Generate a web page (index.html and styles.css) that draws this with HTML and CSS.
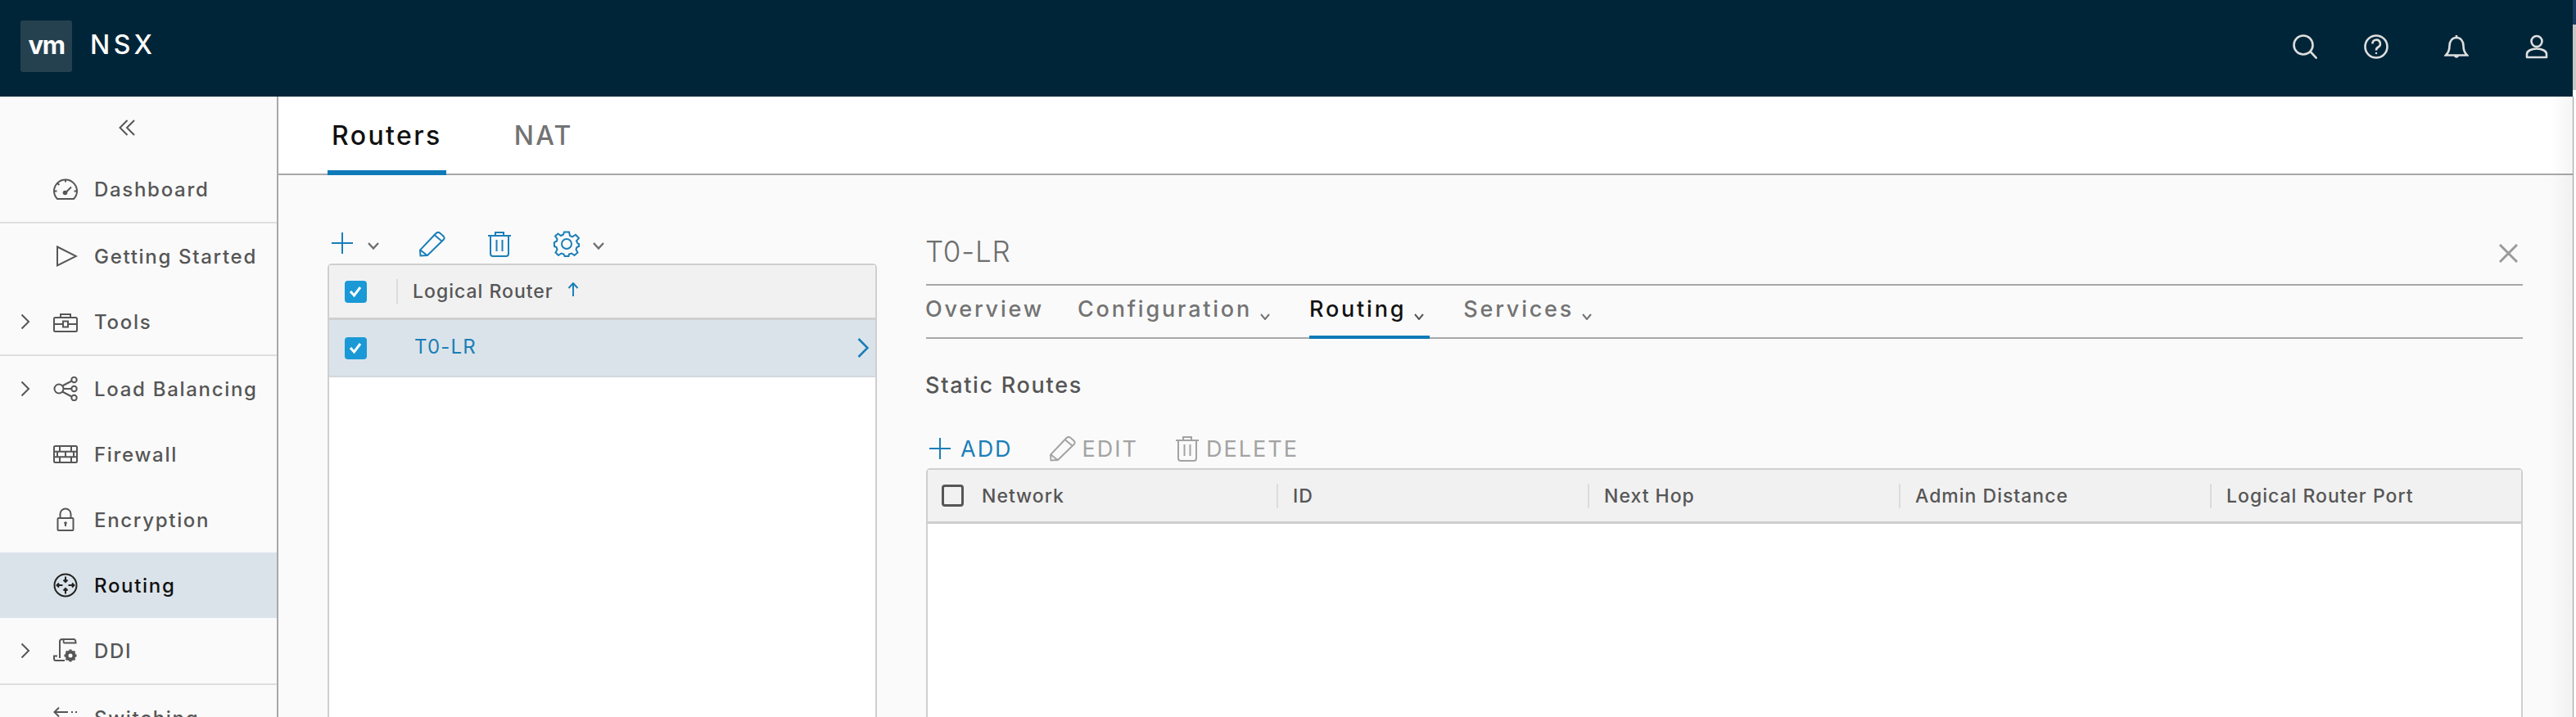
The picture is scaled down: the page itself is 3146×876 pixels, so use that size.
FILE: index.html
```html
<!DOCTYPE html>
<html lang="en">
<head>
    <meta charset="UTF-8">
    <title>NSX</title>
    <link rel="stylesheet" href="styles.css">
</head>
<body>
    <div class="page">
        <header class="header">
            <div class="logo"><span class="logo-vm">vm</span></div>
            <div class="brand">NSX</div>
            <div class="header-icons">
                <svg class="search-icon" width="30" height="30" viewBox="0 0 30 30"><circle cx="13" cy="13" r="11.5"/><path d="M21.500 21 L29.500 29.500"/></svg>
                <svg class="help-icon" width="30" height="30" viewBox="0 0 30 30"><circle cx="15" cy="15" r="13.500"/><path d="M10.500 11.500 A4.700 4.700 0 1 1 17.500 15.500 C15.500 16.500 15 17.500 15 19.500"/><circle class="fill" cx="15" cy="23" r="1.200"/></svg>
                <svg class="bell-icon" width="30" height="30" viewBox="0 0 30 30"><path d="M2 25.500 C5.500 22 6.500 19 6.500 14 C6.500 8 10 4 15 4 C20 4 23.500 8 23.500 14 C23.500 19 24.500 22 28 25.500 Z"/><path d="M15 1 V4"/><path class="fill" d="M12 26 H18 C17.500 29.500 12.500 29.500 12 26 Z"/></svg>
                <svg class="user-icon" width="30" height="30" viewBox="0 0 30 30"><circle cx="15" cy="8.500" r="6.500"/><path d="M3 28 V24 C3 20 9 17.500 15 17.500 C21 17.500 27 20 27 24 V28 Z" stroke-linejoin="round"/></svg>
            </div>
        </header>

        <div class="layout">
            <nav class="sidebar">
                <div class="collapse">
                    <svg width="20" height="20" viewBox="0 0 20 20"><path d="M10.500 1 L1.500 10 L10.500 19 M19 1 L10 10 L19 19"/></svg>
                </div>
                <div class="nav-group">
                    <div class="nav-item">
                        <span class="nav-arrow"></span>
                        <svg class="nav-icon" width="30" height="30" viewBox="0 0 30 30"><path d="M5 27 C2.500 24.500 1 21 1 17.500 A14 14 0 0 1 29 17.500 C29 21 27.500 24.500 25 27 Z"/><path d="M15 3.500 V6.500 M5 7.500 L7.300 10 M1 17.500 H4.500 M25.500 17.500 H29 M15.500 19 L22 12.500"/><circle class="fill" cx="14.500" cy="19.500" r="2.800"/></svg>
                        <span>Dashboard</span>
                    </div>
                </div>
                <div class="nav-group">
                    <div class="nav-item">
                        <span class="nav-arrow"></span>
                        <svg class="nav-icon" width="30" height="30" viewBox="0 0 30 30"><path d="M5 3.500 L28 15 L5 26.500 Z"/></svg>
                        <span>Getting Started</span>
                    </div>
                    <div class="nav-item">
                        <svg class="nav-arrow" width="12" height="20" viewBox="0 0 12 20"><path d="M1.500 1.500 L10 10 L1.500 18.500"/></svg>
                        <svg class="nav-icon" width="30" height="30" viewBox="0 0 30 30"><path d="M2.500 10 H27.500 C28.500 10 29 10.500 29 11.500 V25.500 C29 26.500 28.500 27 27.500 27 H2.500 C1.500 27 1 26.500 1 25.500 V11.500 C1 10.500 1.500 10 2.500 10 Z M1 18 H12 M18 18 H29 M9 10 V6 H21 V10"/><rect x="12" y="14.500" width="6" height="7"/></svg>
                        <span>Tools</span>
                    </div>
                </div>
                <div class="nav-group">
                    <div class="nav-item">
                        <svg class="nav-arrow" width="12" height="20" viewBox="0 0 12 20"><path d="M1.500 1.500 L10 10 L1.500 18.500"/></svg>
                        <svg class="nav-icon" width="30" height="30" viewBox="0 0 30 30"><circle cx="7" cy="15" r="5.500"/><circle cx="25.500" cy="4" r="3.200"/><circle cx="25.500" cy="15" r="3.200"/><circle cx="25.500" cy="26" r="3.200"/><path d="M11 11.500 L22.500 5.500 M12.500 15 H22 M11 18.500 L22.500 24.500"/></svg>
                        <span>Load Balancing</span>
                    </div>
                    <div class="nav-item">
                        <span class="nav-arrow"></span>
                        <svg class="nav-icon" width="30" height="30" viewBox="0 0 30 30"><rect x="1" y="5" width="28" height="20" rx="1.500"/><path d="M1 11.700 H29 M1 18.300 H29 M8 5 V11.700 M22 5 V11.700 M15 11.700 V18.300 M5 11.700 V18.300 M25 11.700 V18.300 M8 18.300 V25 M22 18.300 V25"/></svg>
                        <span>Firewall</span>
                    </div>
                    <div class="nav-item">
                        <span class="nav-arrow"></span>
                        <svg class="nav-icon" width="30" height="30" viewBox="0 0 30 30"><rect x="5.500" y="13" width="19" height="15" rx="1"/><path d="M8.500 13 V8 A6.500 6.500 0 0 1 21.500 8 V13 M15 19.500 V23"/><circle class="fill" cx="15" cy="19" r="1.800"/></svg>
                        <span>Encryption</span>
                    </div>
                    <div class="nav-item nav-item-active">
                        <span class="nav-arrow"></span>
                        <svg class="nav-icon" width="30" height="30" viewBox="0 0 30 30"><circle cx="15" cy="15" r="13.500"/><path d="M15 4.500 V11 M12.500 8.500 L15 11 L17.500 8.500 M15 25.500 V19 M12.500 21.500 L15 19 L17.500 21.500 M11.500 15 H4.500 M7 12.500 L4.500 15 L7 17.500 M18.500 15 H25.500 M23 12.500 L25.500 15 L23 17.500"/></svg>
                        <span>Routing</span>
                    </div>
                    <div class="nav-item">
                        <svg class="nav-arrow" width="12" height="20" viewBox="0 0 12 20"><path d="M1.500 1.500 L10 10 L1.500 18.500"/></svg>
                        <svg class="nav-icon" width="30" height="30" viewBox="0 0 30 30"><path d="M8 24 V4 C8 2 9 1 11 1 H25 C27 1 27.500 3 27.500 5.500 H12.500 M12 1 C13 2 13 3.500 12.500 5.500 M14 27 H3 C1.500 27 1 26 1 24.500 V21.500 H5"/><circle cx="21" cy="21" r="4.500" stroke-width="4"/><path d="M21 13.500 V15 M21 27 V28.500 M13.500 21 H15 M27 21 H28.500 M15.700 15.700 L16.700 16.700 M25.300 25.300 L26.300 26.300 M15.700 26.300 L16.700 25.300 M25.300 16.700 L26.300 15.700" stroke-width="3"/></svg>
                        <span>DDI</span>
                    </div>
                </div>
                <div class="nav-group">
                    <div class="nav-item">
                        <span class="nav-arrow"></span>
                        <svg class="nav-icon" width="30" height="30" viewBox="0 0 30 30"><path d="M18 8 H1.500 M7 2.500 L1.500 8 L7 13.500 M22 8 H24 M27 8 H29 M12 22 H28.500 M23 16.500 L28.500 22 L23 27.500 M1 22 H3 M6 22 H8"/></svg>
                        <span>Switching</span>
                    </div>
                </div>
            </nav>

            <main class="main">
                <div class="top-tabs">
                    <div class="top-tab top-tab-active">Routers</div>
                    <div class="top-tab">NAT</div>
                </div>
                <div class="content">
                    <section class="list-panel">
                        <div class="list-toolbar">
                            <svg class="tool-plus blue" width="26" height="26" viewBox="0 0 26 26"><path d="M0 13 H26 M13 0 V26"/></svg>
                            <svg class="tool-caret" width="14" height="9" viewBox="0 0 14 9"><path d="M1 1 L7 7.500 L13 1"/></svg>
                            <svg class="tool-pencil blue" width="34" height="32" viewBox="0 0 34 32"><path d="M2.500 30.500 L2 23.500 L21 3.500 C23 1.500 24.500 1.500 26 2.500 L30.500 6.500 C32 8 32 9.500 30.500 11 L11 30 Z M2.500 23.500 L10.500 30 M19.500 5 L29 13"/></svg>
                            <svg class="tool-trash blue" width="28" height="32" viewBox="0 0 28 32"><path d="M0 6 H28 M9 5.500 V2 H19 V5.500 M3 6 V28 C3 30 4 31 6 31 H22 C24 31 25 30 25 28 V6 M10.500 11 V25 M17.500 11 V25"/></svg>
                            <svg class="tool-gear blue" width="32" height="32" viewBox="0 0 32 32"><circle cx="16" cy="16" r="6"/><path d="M13 1.500 H19 L20 6 L23 7.300 L27 4.700 L31 9 L28 12.500 L29.500 15.500 L31 16 V19 L28.500 20 L27.500 23 L29.500 26.500 L25.500 30 L22 27.500 L19 28.500 L18.500 31 H13.500 L12.500 28.500 L9.500 27.500 L6 30 L2.500 26.500 L4.500 23 L3.500 20 L1 19 V14 L4 12.500 L4.500 10 L2 6.500 L5.500 3.500 L9 6 L12 4.500 Z"/></svg>
                            <svg class="tool-caret" width="14" height="9" viewBox="0 0 14 9"><path d="M1 1 L7 7.500 L13 1"/></svg>
                        </div>
                        <div class="grid">
                            <div class="grid-head list-head">
                                <span class="check check-on head-check"><svg width="26" height="26" viewBox="0 0 26 26"><path d="M7 13 L11.500 18 L19 8"/></svg></span>
                                <span class="head-sep"></span>
                                <span class="head-text">Logical Router</span>
                                <svg class="sort-arrow" width="14" height="18" viewBox="0 0 14 18"><path d="M7 17 V1 M1.500 7 L7 1 L12.500 7"/></svg>
                            </div>
                            <div class="list-row">
                                <span class="check check-on"><svg width="26" height="26" viewBox="0 0 26 26"><path d="M7 13 L11.500 18 L19 8"/></svg></span>
                                <span class="row-text">T0-LR</span>
                                <svg class="row-arrow" width="14" height="24" viewBox="0 0 14 24"><path d="M1.500 1 L12.500 12 L1.500 23"/></svg>
                            </div>
                        </div>
                    </section>

                    <section class="detail-panel">
                        <div class="detail-title">
                            <h2>T0-LR</h2>
                            <svg class="close-icon" width="23" height="23" viewBox="0 0 23 23"><path d="M1 1 L22 22 M22 1 L1 22"/></svg>
                        </div>
                        <div class="sub-tabs">
                            <div class="sub-tab">Overview</div>
                            <div class="sub-tab">Configuration <svg width="12" height="8" viewBox="0 0 12 8"><path d="M1 1 L6 7 L11 1"/></svg></div>
                            <div class="sub-tab sub-tab-active">Routing <svg width="12" height="8" viewBox="0 0 12 8"><path d="M1 1 L6 7 L11 1"/></svg></div>
                            <div class="sub-tab">Services <svg width="12" height="8" viewBox="0 0 12 8"><path d="M1 1 L6 7 L11 1"/></svg></div>
                        </div>
                        <h3 class="section-title">Static Routes</h3>
                        <div class="action-bar">
                            <div class="action action-on">
                                <svg class="action-plus" width="26" height="26" viewBox="0 0 26 26"><path d="M0 13 H26 M13 0 V26"/></svg>
                                <span>ADD</span>
                            </div>
                            <div class="action action-edit">
                                <svg width="34" height="32" viewBox="0 0 34 32"><path d="M2.500 30.500 L2 23.500 L21 3.500 C23 1.500 24.500 1.500 26 2.500 L30.500 6.500 C32 8 32 9.500 30.500 11 L11 30 Z M2.500 23.500 L10.500 30 M19.500 5 L29 13"/></svg>
                                <span>EDIT</span>
                            </div>
                            <div class="action action-delete">
                                <svg width="28" height="32" viewBox="0 0 28 32"><path d="M0 6 H28 M9 5.500 V2 H19 V5.500 M3 6 V28 C3 30 4 31 6 31 H22 C24 31 25 30 25 28 V6 M10.500 11 V25 M17.500 11 V25"/></svg>
                                <span>DELETE</span>
                            </div>
                        </div>
                        <div class="grid grid-routes">
                            <div class="grid-head routes-head">
                                <div class="col col-first"><span class="check"></span><span class="head-text">Network</span></div>
                                <div class="col"><span class="head-text">ID</span></div>
                                <div class="col"><span class="head-text">Next Hop</span></div>
                                <div class="col"><span class="head-text">Admin Distance</span></div>
                                <div class="col"><span class="head-text">Logical Router Port</span></div>
                            </div>
                        </div>
                    </section>
                </div>
            </main>
        </div>
    </div>
    <div class="scroll-edge"></div>
</body>
</html>
```

FILE: styles.css
```css
* {
    box-sizing: border-box;
}
html, body {
    height: 100%;
}
body {
    margin: 0;
    display: flex;
    overflow: hidden;
    background: #fff;
    color: #565656;
    font-family: Inter, "Open Sans", sans-serif;
}
svg {
    display: block;
    flex: none;
    fill: none;
    stroke: #565656;
    stroke-width: 2;
}
svg .fill {
    fill: #565656;
    stroke: none;
}
.page {
    flex: 1;
    min-width: 0;
    display: flex;
    flex-direction: column;
    height: 100vh;
}
.scroll-edge {
    width: 4px;
    background:
        linear-gradient(90deg, #9c9c9c 1px, transparent 1px) 0 118px no-repeat,
        linear-gradient(#1c3b60 0 30px, #c6c6c6 30px 110px, #fff 110px);
}

/* header */
.header {
    height: 118px;
    flex: none;
    display: flex;
    align-items: center;
    padding: 0 29px 0 25px;
    background: #002538;
    color: #fff;
}
.logo {
    width: 63px;
    height: 63px;
    margin-top: -6px;
    border-radius: 3px;
    background: #25414f;
    display: flex;
    align-items: center;
    justify-content: center;
}
.logo-vm {
    font-size: 31px;
    font-weight: 700;
    letter-spacing: -1.5px;
    line-height: 1;
    margin-top: -3px;
}
.brand {
    margin: -9px 0 0 22px;
    font-size: 32px;
    font-weight: 500;
    letter-spacing: 4.5px;
}
.header-icons {
    margin-left: auto;
    display: flex;
    gap: 68px;
    margin-top: -4px;
}
.header-icons svg {
    stroke: #dedede;
    stroke-width: 2.6;
}
.header-icons svg .fill {
    fill: #dedede;
    stroke: none;
}
.help-icon {
    margin-left: -11px;
}

.layout {
    flex: 1;
    min-height: 0;
    display: flex;
}

/* left nav */
.sidebar {
    width: 340px;
    flex: none;
    background: #fafafa;
    border-right: 2px solid #a8a8a8;
    overflow: hidden;
}
.collapse {
    height: 73px;
    display: flex;
    padding: 28px 0 0 145px;
}
.nav-group {
    border-bottom: 2px solid #dedede;
}
.nav-item {
    height: 80px;
    display: flex;
    align-items: center;
    padding-left: 25px;
    font-size: 24px;
    font-weight: 500;
    letter-spacing: 1.7px;
}
.nav-arrow {
    width: 12px;
    margin-right: 28px;
}
.nav-icon {
    margin-right: 20px;
}
.nav-item-active {
    background: #dbe3ea;
    color: #111;
}
.nav-item-active svg {
    stroke: #222;
}

/* top tabs */
.main {
    flex: 1;
    min-width: 0;
    position: relative;
    display: flex;
    flex-direction: column;
    background: #fafafa;
}
.main::after {
    content: "";
    position: absolute;
    top: 0;
    right: 0;
    bottom: 0;
    width: 28px;
    background: linear-gradient(90deg, rgba(0, 0, 0, 0), rgba(0, 0, 0, 0.04));
}
.top-tabs {
    height: 96px;
    flex: none;
    display: flex;
    padding-left: 60px;
    background: #fff;
    border-bottom: 2px solid #a8a8a8;
}
.top-tab {
    height: 96px;
    padding: 28px 5px 0;
    margin-right: 78px;
    font-size: 32px;
    font-weight: 500;
    letter-spacing: 2.4px;
    color: #737373;
}
.top-tab-active {
    color: #111;
    border-bottom: 6px solid #0f7ab8;
}

/* panels */
.content {
    flex: 1;
    min-height: 0;
    display: flex;
    gap: 60px;
    padding-left: 60px;
}
.list-panel {
    width: 671px;
    flex: none;
    display: flex;
    flex-direction: column;
    padding-top: 68px;
}
.list-toolbar {
    height: 40px;
    flex: none;
    display: flex;
    align-items: flex-start;
    padding-left: 5px;
}
.list-toolbar svg {
    stroke: #1a7fb8;
}
.list-toolbar .tool-caret {
    stroke: #6e6e6e;
    stroke-width: 2.4;
    margin-top: 14px;
}
.tool-plus {
    margin: 2px 18px 0 0;
}
.tool-pencil {
    margin-left: 48px;
}
.tool-trash {
    margin-left: 51px;
}
.tool-gear {
    margin: 0 16px 0 52px;
}
.grid {
    flex: 1;
    border: 2px solid #cfcfcf;
    border-bottom: 0;
    border-radius: 5px 5px 0 0;
    background: #fff;
}
.grid-head {
    background: #f1f1f1;
    border-bottom: 3px solid #cfcfcf;
    display: flex;
    align-items: center;
}
.list-head {
    height: 67px;
    padding-left: 19px;
}
.head-text {
    font-size: 23px;
    font-weight: 500;
    letter-spacing: 1px;
    color: #565656;
}
.head-sep {
    width: 2px;
    height: 30px;
    margin: 0 18px 0 36px;
    background: #dcdcdc;
}
.sort-arrow {
    stroke: #1a7fb8;
    margin: -4px 0 0 17px;
}
.check {
    width: 27px;
    height: 27px;
    flex: none;
    border: 3px solid #565656;
    border-radius: 4px;
}
.check-on {
    background: #1a99d6;
    border: 0;
}
.check-on svg {
    stroke: #fff;
    stroke-width: 3;
}
.list-row {
    height: 70px;
    display: flex;
    align-items: center;
    padding: 0 8px 0 19px;
    background: #dbe3ea;
    border-bottom: 2px solid #d2d8dd;
}
.row-text {
    margin: -3px 0 0 58px;
    font-size: 24px;
    letter-spacing: 1.2px;
    color: #1a7fb8;
}
.row-arrow {
    margin-left: auto;
    stroke: #1a7fb8;
    stroke-width: 2.6;
}

/* detail */
.detail-panel {
    width: 1950px;
    flex: none;
    display: flex;
    flex-direction: column;
}
.detail-title {
    height: 135px;
    flex: none;
    display: flex;
    justify-content: space-between;
    padding: 0 6px 0 0;
    border-bottom: 2px solid #a8a8a8;
}
.detail-title h2 {
    margin: 73px 0 0 -1px;
    font-size: 35px;
    font-weight: 300;
    letter-spacing: 0.8px;
    line-height: 40px;
    color: #6e6e6e;
}
.close-icon {
    margin-top: 84px;
    stroke: #9a9a9a;
    stroke-width: 3;
}
.sub-tabs {
    height: 65px;
    flex: none;
    display: flex;
    gap: 41px;
    border-bottom: 2px solid #a8a8a8;
}
.sub-tab {
    height: 65px;
    padding-top: 12px;
    display: flex;
    align-items: flex-start;
    font-size: 27px;
    font-weight: 500;
    letter-spacing: 2.8px;
    color: #737373;
    white-space: pre;
}
.sub-tab:first-child {
    margin-left: -1px;
}
.sub-tab svg {
    stroke: #737373;
    margin: 22px 7px 0 0;
}
.sub-tab-active {
    color: #111;
    border-bottom: 4px solid #0f7ab8;
}
.sub-tab-active svg {
    stroke: #565656;
}
.section-title {
    margin: 41px 0 0 -1px;
    font-size: 27px;
    line-height: 32px;
    font-weight: 500;
    letter-spacing: 1.7px;
    color: #565656;
}
.action-bar {
    height: 40px;
    margin-top: 45px;
    flex: none;
    display: flex;
    color: #a3a3a3;
}
.action {
    display: flex;
    align-items: center;
    gap: 7px;
    height: 32px;
    margin-right: 44px;
    font-size: 27px;
    letter-spacing: 2px;
}
.action svg {
    stroke: #a3a3a3;
}
.action-on {
    color: #1a7fb8;
    padding-left: 4px;
    gap: 12px;
}
.action-on svg {
    stroke: #1a7fb8;
}
.action-edit {
    margin-right: 46px;
}
.action-delete {
    gap: 9px;
}
.grid-routes {
    border-radius: 5px 5px 0 0;
}
.routes-head {
    height: 66px;
}
.col {
    width: 380px;
    height: 30px;
    padding-left: 18px;
    border-left: 2px solid #dcdcdc;
    display: flex;
    align-items: center;
}
.col-first {
    width: 426px;
    padding-left: 17px;
    border-left: 0;
}
.col-first .check {
    margin-right: 22px;
}
```
